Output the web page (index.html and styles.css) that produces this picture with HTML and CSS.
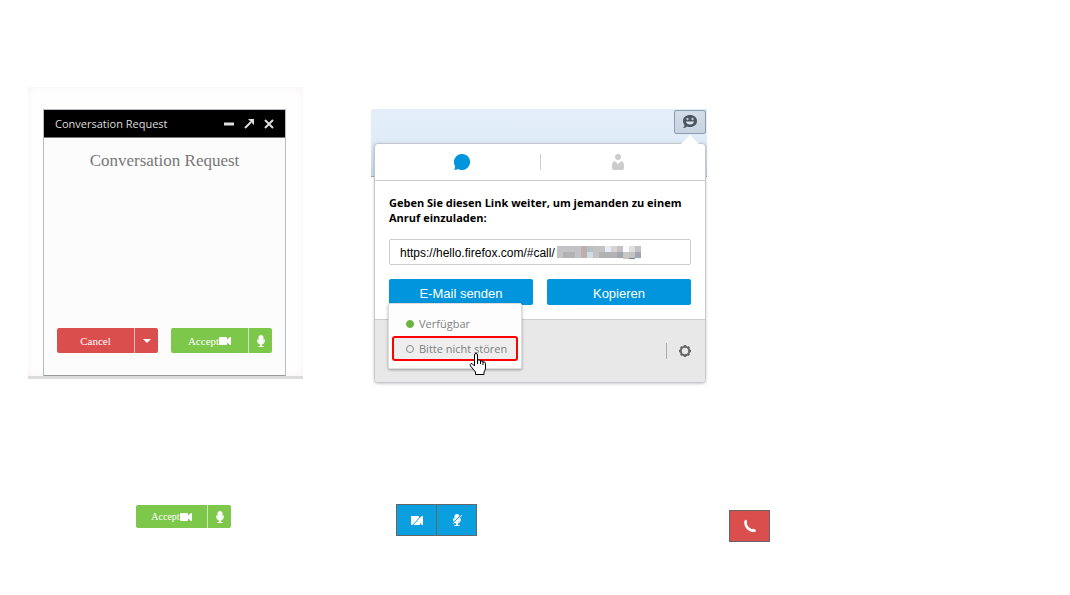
FILE: index.html
```html
<!DOCTYPE html>
<html lang="de">
<head>
    <meta charset="UTF-8">
    <title>Conversation Request</title>
    <link rel="stylesheet" href="styles.css">
</head>
<body>

    <!-- Shared icons -->
    <svg class="sprite" aria-hidden="true">
        <symbol id="camera" viewBox="0 0 12 10">
            <path d="M1 1h6q1 0 1 1v1.500l3-2.500h1v8h-1l-3-2.500V8q0 1-1 1H1Q0 9 0 8V2q0-1 1-1z"/>
        </symbol>
        <symbol id="mic" viewBox="0 0 10 14">
            <rect x="2.500" y="1" width="5" height="8" rx="2.500"/>
            <path d="M1 5.500h1.500q0 3.500 2.500 3.500t2.500-3.500H9q0 4-3 5v1.500h1.500v1h-5v-1H4v-1.500q-3-1-3-5z"/>
        </symbol>
    </svg>

    <main>
        <section class="row windows">
            <div class="chat-frame">
                <div class="chat">
                    <header class="chat-bar">
                        <span>Conversation Request</span>
                        <button aria-label="Minimize"><svg width="12" height="12" viewBox="0 0 12 12"><path d="M1 6h10" stroke-width="3"/></svg></button>
                        <button aria-label="Detach"><svg width="12" height="12" viewBox="0 0 12 12"><path d="M2 10l6-6" stroke-width="2"/><path d="M5 1h6v6z" fill="currentColor" stroke="none"/></svg></button>
                        <button aria-label="Close"><svg width="12" height="12" viewBox="0 0 12 12"><path d="M2 2l8 8M10 2l-8 8" stroke-width="2"/></svg></button>
                    </header>
                    <h1>Conversation Request</h1>
                    <div class="chat-actions">
                        <div class="split cancel">
                            <button>Cancel</button>
                            <button class="side" aria-label="More"><svg width="10" height="6" viewBox="0 0 10 6"><path d="M1 1h8L5 5z"/></svg></button>
                        </div>
                        <div class="split accept">
                            <button>Accept<svg width="12" height="10"><use href="#camera"/></svg></button>
                            <button class="side" aria-label="Audio only"><svg width="10" height="14"><use href="#mic"/></svg></button>
                        </div>
                    </div>
                </div>
            </div>

            <div class="browser">
                <div class="toolbar">
                    <button class="hello" aria-label="Hello">
                        <svg width="16" height="16" viewBox="0 0 16 16"><path d="M8 1c4 0 7 2.500 7 6s-3 6-7 6q-1.500 0-3-.5Q3.500 14 1 14q1.500-1 1.500-3Q1 9.500 1 7c0-3.500 3-6 7-6z" fill="#4a5660"/><circle cx="5.500" cy="5" r="1.200" fill="#b8c4ce"/><circle cx="10.500" cy="5" r="1.200" fill="#b8c4ce"/><path d="M4 7.500h8q-.5 3-4 3t-4-3z" fill="#dce4ea"/></svg>
                    </button>
                </div>
                <div class="panel">
                    <nav class="tabs">
                        <button aria-label="Link"><svg width="18" height="18" viewBox="0 0 18 18"><path d="M9 1a8 8 0 1 1-4 14.900Q3.500 17 1 16.800 2.300 15.500 2 13A8 8 0 0 1 9 1z" fill="#0095dd"/></svg></button>
                        <button aria-label="Kontakte"><svg width="14" height="18" viewBox="0 0 14 18"><circle cx="7" cy="4" r="3"/><path d="M3.500 8L7 11l3.500-3Q13 9 13 12v3q0 2-2 2H3q-2 0-2-2v-3q0-3 2.500-4z"/></svg></button>
                    </nav>
                    <div class="share">
                        <label for="call-url">Geben Sie diesen Link weiter, um jemanden zu einem Anruf einzuladen:</label>
                        <div class="url-box">
                            <input id="call-url" type="text" value="https://hello.firefox.com/#call/" readonly>
                            <svg width="84" height="13" viewBox="0 0 84 13" shape-rendering="crispEdges">
                                <path d="M0 0h84v12H0z" fill="#c3c2c4"/>
                                <path d="M6 6h12v6H6zM42 6h18v6H42z" fill="#b2b2b5"/>
                                <path d="M24 0h6v12h-6z" fill="#bfb0af"/>
                                <path d="M30 0h6v6h-6z" fill="#b5c1c4"/>
                                <path d="M30 6h6v6h-6z" fill="#cfdde5"/>
                                <path d="M48 0h6v6h-6z" fill="#e6ecf1"/>
                                <path d="M54 0h6v6h-6z" fill="#d8d4d3"/>
                                <path d="M66 0h6v6h-6z" fill="#fafafa"/>
                                <path d="M72 0h6v6h-6z" fill="#dfe0dc"/>
                                <path d="M60 6h6v6h-6zM78 6h6v6h-6z" fill="#a2a4ae"/>
                                <path d="M66 6h6v7h-6z" fill="#c9c6c3"/>
                                <path d="M72 12h6v1h-6z" fill="#6f7f95"/>
                            </svg>
                        </div>
                        <div class="share-buttons">
                            <button>E-Mail senden</button>
                            <button>Kopieren</button>
                        </div>
                    </div>
                    <footer>
                        <button class="gear" aria-label="Einstellungen"><svg width="14" height="14" viewBox="0 0 14 14"><circle cx="7" cy="7" r="4.200" fill="none" stroke="#666" stroke-width="2"/><path d="M5.800 1h2.400v2H5.800zM5.800 11h2.400v2H5.800zM1 5.800h2v2.400H1zM11 5.800h2v2.400h-2zM2 3.500L3.500 2l1.500 1.500L3.500 5zM9 3.500L10.500 2 12 3.500 10.500 5zM2 10.500L3.500 9 5 10.500 3.500 12zM9 10.500L10.500 9l1.500 1.500-1.500 1.500z" fill="#666"/></svg></button>
                    </footer>
                    <div class="status-menu">
                        <button><i class="dot online"></i>Verfügbar</button>
                        <button class="selected"><i class="dot"></i>Bitte nicht stören</button>
                        <svg class="cursor" width="18" height="23" viewBox="0 0 18 23"><path d="M5.500 13V2q0-1.500 1.500-1.500T8.500 2v5q3-.5 3 1 2.500-.5 2.500 1 2.500-.5 2.500 1.500V15q0 2-1.500 4v2.500H6.500V19L1.500 13q-1-2 .5-2.500 1.500 0 3.500 2.500z" fill="#fff" stroke="#000"/><path d="M8.500 7v4M11.500 8v3M14 9v3" stroke="#000"/></svg>
                    </div>
                </div>
            </div>
        </section>

        <section class="row samples">
            <div class="split accept small">
                <button>Accept<svg width="12" height="10"><use href="#camera"/></svg></button>
                <button class="side" aria-label="Audio only"><svg width="10" height="14"><use href="#mic"/></svg></button>
            </div>
            <div class="mute-group">
                <button aria-label="Camera off"><svg width="14" height="14" viewBox="0 0 14 14"><path d="M1 3h8v2l3-2h1v9h-1l-2-2v2H1z"/><path d="M2 13L12 2" stroke="#0c9fe0"/></svg></button>
                <button aria-label="Microphone off"><svg width="14" height="14" viewBox="0 0 14 14"><use href="#mic" x="2" width="10" height="14"/><path d="M3 10l8-8" stroke="#0c9fe0"/><path d="M3 11l9-9" stroke="#fff"/></svg></button>
            </div>
            <button class="hangup" aria-label="Hang up"><svg width="14" height="14" viewBox="0 0 14 14"><path d="M2 1q1-.7 1.700.5l.5 2q0 .8-.7 1.300Q5 8.500 8.700 10.300q.8-.9 1.600-.5l2.200 1q1 1 0 1.700-2 1-5 0Q3 10.500 1.500 6 .5 2.500 2 1z"/></svg></button>
        </section>
    </main>

</body>
</html>
```
FILE: styles.css
```css
* {
    box-sizing: border-box;
}

body {
    margin: 0;
    background: #fff;
    font-family: "Open Sans", "Segoe UI", sans-serif;
}

button {
    display: flex;
    align-items: center;
    justify-content: center;
    margin: 0;
    padding: 0;
    border: none;
    background: none;
    color: inherit;
    font: inherit;
    cursor: pointer;
}

svg {
    display: block;
    flex: none;
    fill: currentColor;
}

.sprite {
    display: none;
}

.row {
    display: flex;
    align-items: flex-start;
}

.windows {
    gap: 68px;
    padding: 87px 0 0 28px;
}

/* Incoming conversation window */
.chat-frame {
    flex: 0 1 275px;
    padding: 22px 17px 0 15px;
    border-bottom: 3px solid #dcdadc;
    background: #fefefe;
    box-shadow: inset 0 0 8px #f8f3f5;
}

.chat {
    border: 1px solid #b4bdc7;
    border-bottom-color: #999;
    background: #fcfcfc;
}

.chat-bar {
    display: flex;
    align-items: center;
    gap: 8px;
    height: 28px;
    padding: 0 10px 0 11px;
    border-bottom: 1px solid #777;
    background: #000;
    color: #ddd;
    font-size: 11px;
}

.chat-bar span {
    flex: 1;
}

.chat-bar svg {
    stroke: currentColor;
}

.chat h1 {
    margin: 13px 0 157px;
    color: #777;
    font: 17px/20px "Liberation Serif", serif;
    text-align: center;
}

.chat-actions {
    display: flex;
    gap: 13px;
    padding: 0 13px 22px;
}

.split {
    display: flex;
    flex: 1;
    height: 25px;
    border-radius: 2px;
    color: #fff;
    font: 11px "Liberation Serif", serif;
}

.split button {
    flex: 1;
}

.split .side {
    flex: 0 0 24px;
    border-left: 1px solid #fff9;
}

.cancel {
    background: #db4e4e;
}

.accept {
    background: #7dc74b;
}

/* Browser toolbar with the Hello panel */
.browser {
    flex: 0 1 336px;
    margin-top: 22px;
    background: linear-gradient(#e3eef9, #e0ecf7 28px, #c4d8ec 67px, #8fa9c6 67px, #8fa9c6 68px, #fff 68px);
}

.toolbar {
    display: flex;
    justify-content: flex-end;
    height: 34px;
    padding: 1px 1px 0;
}

.hello {
    width: 32px;
    height: 24px;
    border: 1px solid #8b9db2;
    border-radius: 2px;
    background: linear-gradient(#d2dde8, #c7d3e0);
}

.panel {
    position: relative;
    margin: 0 1px 0 3px;
    border: 1px solid #c5c8cc;
    border-radius: 4px;
    background: #fff;
    box-shadow: 0 1px 3px #0003;
}

.panel::before {
    content: "";
    position: absolute;
    top: -9px;
    right: 6px;
    border: 9px solid transparent;
    border-top: none;
    border-bottom-color: #fff;
}

.tabs {
    display: flex;
    align-items: center;
    height: 37px;
    padding: 0 9px;
    border-bottom: 1px solid #ccc;
    color: #ccc;
}

.tabs button {
    flex: 1;
    height: 16px;
}

.tabs button + button {
    border-left: 1px solid #ccc;
}

.share {
    padding: 14px;
}

.share label {
    display: block;
    margin-bottom: 14px;
    font-size: 11px;
    font-weight: bold;
    line-height: 15px;
}

.url-box {
    display: flex;
    align-items: center;
    height: 26px;
    padding-left: 10px;
    border: 1px solid #ccc;
    border-radius: 2px;
}

.url-box input {
    width: 157px;
    padding: 2px 0 0;
    border: none;
    color: #000;
    font: 12px "Liberation Sans", Arial, sans-serif;
}

.share-buttons {
    display: flex;
    gap: 14px;
    margin-top: 14px;
}

.share-buttons button {
    flex: 1;
    height: 26px;
    padding-top: 3px;
    border-radius: 2px;
    background: #0095dd;
    color: #fff;
    font: 13px "Liberation Sans", Arial, sans-serif;
}

footer {
    display: flex;
    align-items: center;
    justify-content: flex-end;
    height: 63px;
    padding-right: 13px;
    border-top: 1px solid #ccc;
    border-radius: 0 0 4px 4px;
    background: #e8e8e8;
}

.gear {
    height: 16px;
    padding-left: 11px;
    border-left: 1px solid #aaa;
}

.status-menu {
    position: absolute;
    bottom: 13px;
    left: 13px;
    width: 134px;
    padding: 7px 3px;
    border: 1px solid #ddd;
    border-radius: 2px;
    background: #fdfdfd;
    box-shadow: 0 1px 3px #0005;
    color: #808080;
    font-size: 11px;
}

.status-menu button {
    justify-content: flex-start;
    width: 100%;
    height: 25px;
    padding-left: 14px;
    white-space: nowrap;
}

.status-menu .selected {
    padding-left: 12px;
    border: 2px solid #f00;
    border-radius: 3px;
    background: #eee;
}

.dot {
    width: 8px;
    height: 8px;
    margin-right: 5px;
    border: 1px solid #888;
    border-radius: 50%;
}

.online {
    border-color: #6cb33f;
    background: #6cb33f;
}

.cursor {
    position: absolute;
    right: 34px;
    bottom: -8px;
}

/* Single button samples */
.samples {
    padding: 121px 0 0 136px;
}

.small {
    flex: 0 0 95px;
    height: 23px;
    margin: 1px 165px 0 0;
    font-size: 10px;
}

.mute-group {
    display: flex;
    margin-right: 252px;
    border: 1px solid #666;
    background: #0c9fe0;
    color: #fff;
}

.mute-group button {
    width: 39px;
    height: 30px;
}

.mute-group button + button {
    width: 40px;
    border-left: 1px solid #666;
}

.hangup {
    width: 41px;
    height: 32px;
    margin-top: 6px;
    border: 1px solid #666;
    background: #db4e4e;
    color: #fff;
}
```
